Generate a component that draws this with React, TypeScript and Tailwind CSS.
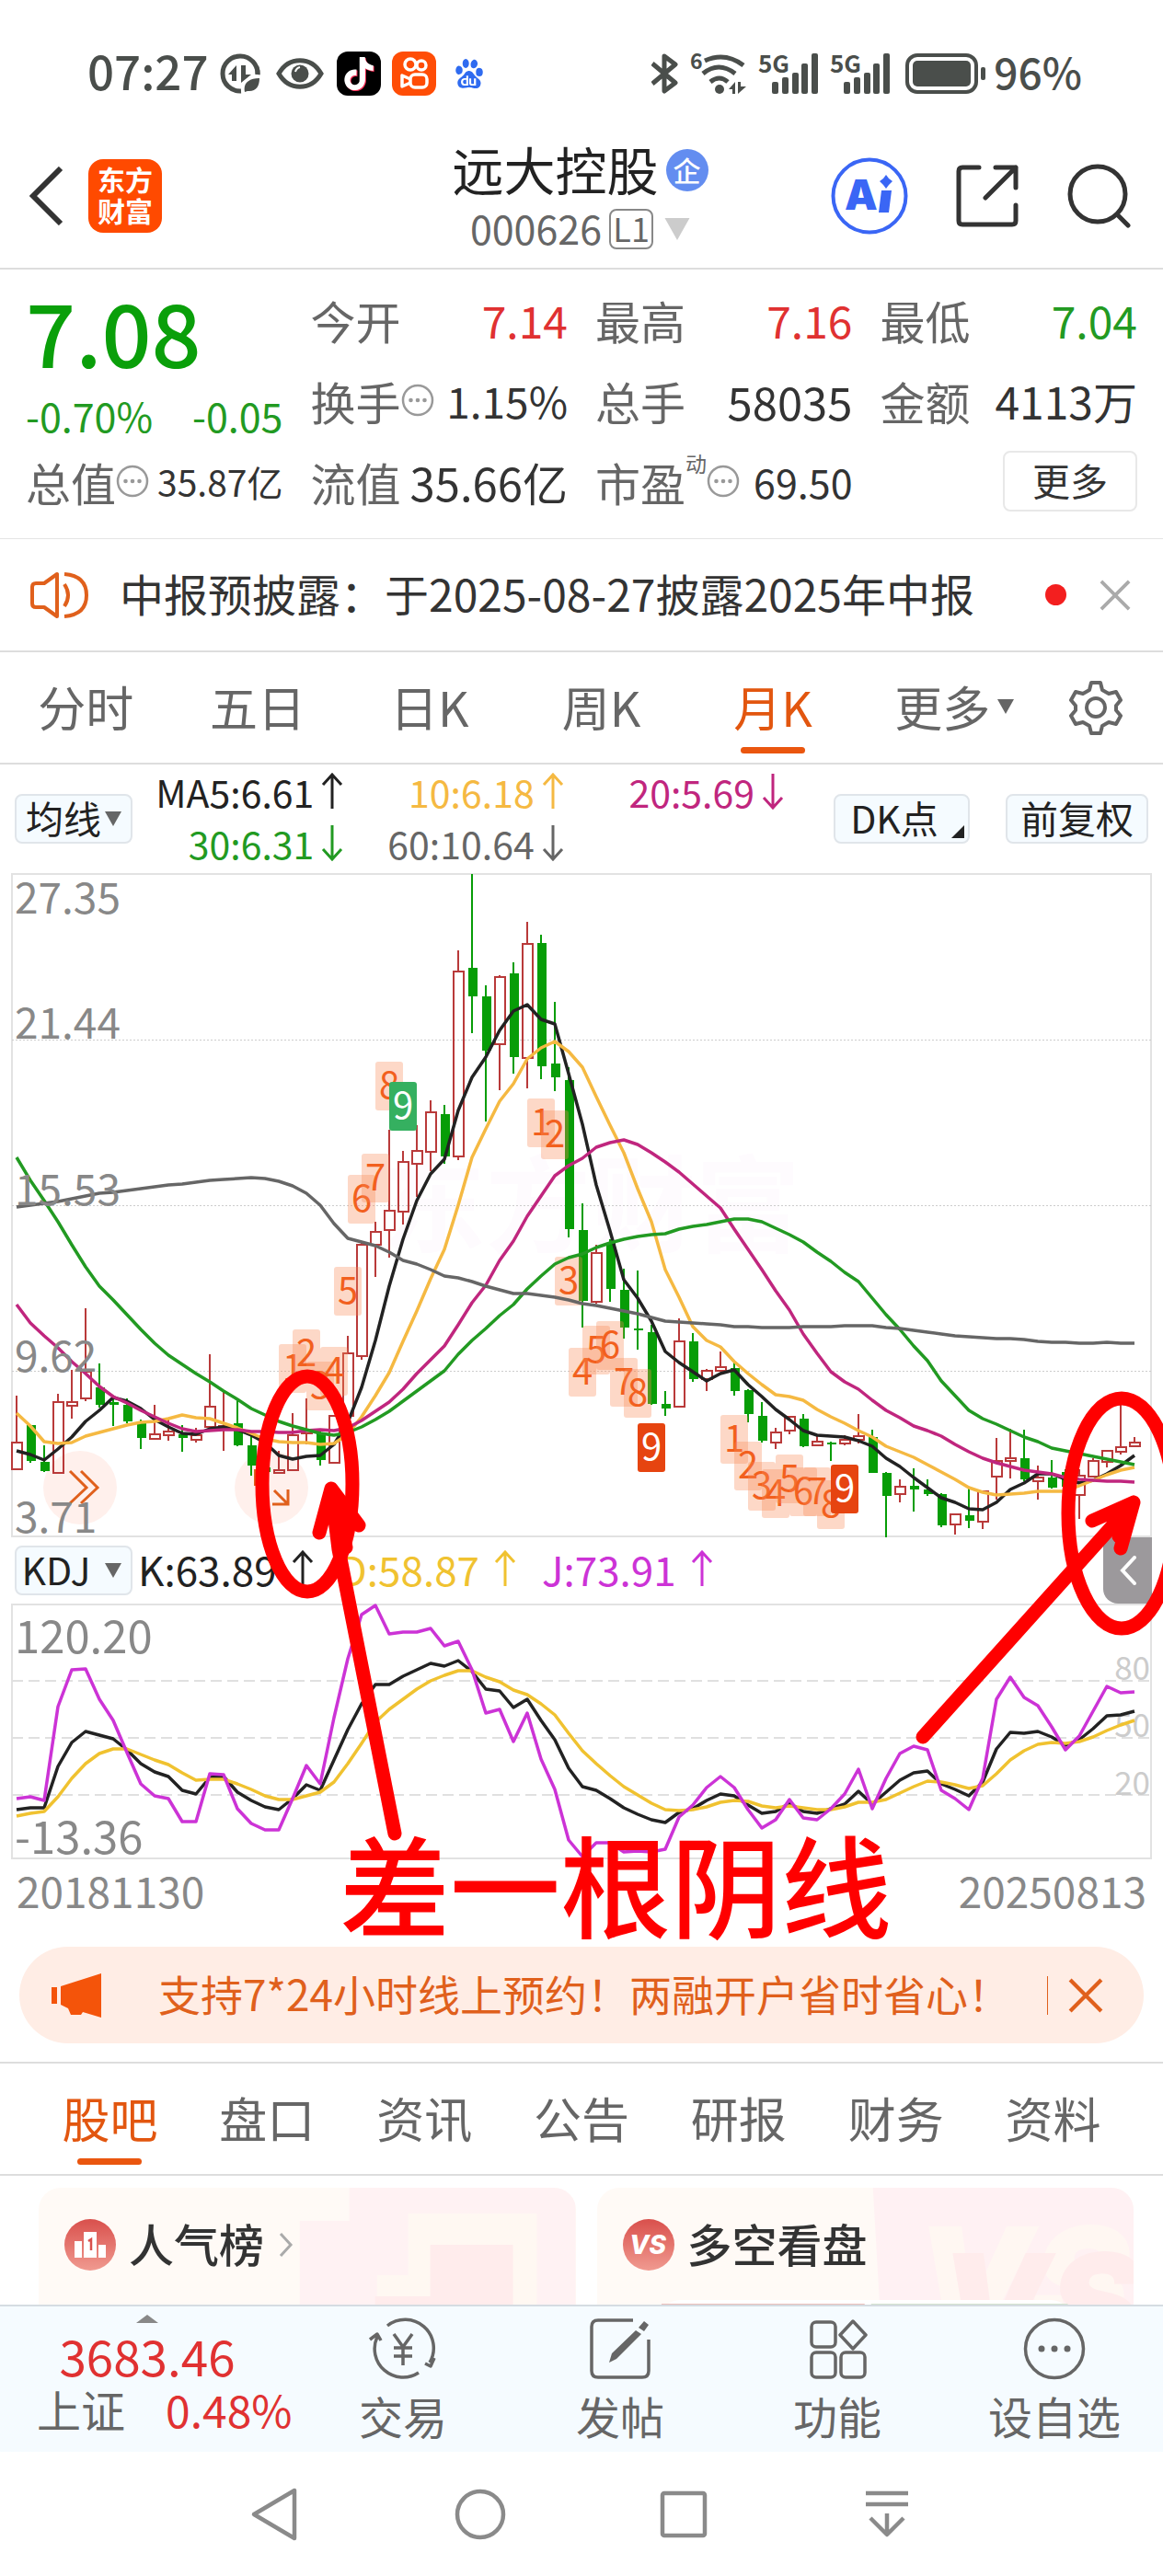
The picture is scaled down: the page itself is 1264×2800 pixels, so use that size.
import type { ReactNode } from 'react'
import clsx from 'clsx'
import { SiBaidu, SiKuaishou, SiTiktok } from 'react-icons/si'

/* ---------- chart data ---------- */

// high, body top, body bottom, low, direction (1 = up, 0 = down), in canvas units
const CANDLES: [number, number, number, number, number][] = [
  [1517, 1568, 1597, 1598, 1], [1549, 1549, 1588, 1590, 0], [1571, 1589, 1599, 1600, 0], [1515, 1524, 1601, 1602, 1],
  [1489, 1524, 1528, 1542, 1], [1422, 1491, 1520, 1523, 1], [1482, 1508, 1527, 1530, 0], [1518, 1524, 1527, 1550, 0],
  [1520, 1527, 1545, 1547, 0], [1543, 1547, 1563, 1575, 0], [1527, 1559, 1564, 1565, 1], [1543, 1556, 1560, 1566, 1],
  [1549, 1559, 1563, 1578, 0], [1552, 1560, 1565, 1568, 1], [1472, 1529, 1551, 1552, 1], [1512, 1550, 1553, 1577, 1],
  [1522, 1547, 1571, 1572, 0], [1560, 1571, 1593, 1604, 0], [1590, 1595, 1600, 1604, 0], [1577, 1598, 1601, 1601, 1],
  [1536, 1560, 1598, 1598, 1], [1520, 1555, 1558, 1570, 1], [1553, 1557, 1587, 1593, 0], [1539, 1539, 1590, 1591, 1],
  [1452, 1471, 1539, 1539, 1], [1350, 1353, 1474, 1478, 1], [1328, 1339, 1353, 1388, 1], [1228, 1316, 1337, 1367, 1],
  [1251, 1263, 1317, 1331, 1], [1223, 1251, 1265, 1301, 1], [1196, 1209, 1252, 1273, 1], [1201, 1211, 1257, 1265, 0],
  [1033, 1056, 1257, 1261, 1], [950, 1052, 1083, 1123, 0], [1071, 1083, 1142, 1219, 0], [1060, 1062, 1135, 1185, 1],
  [1046, 1058, 1149, 1167, 0], [1002, 1026, 1150, 1183, 1], [1016, 1025, 1159, 1173, 0], [1089, 1156, 1171, 1186, 0],
  [1160, 1174, 1336, 1345, 0], [1308, 1337, 1414, 1443, 0], [1353, 1362, 1415, 1417, 1], [1347, 1351, 1401, 1415, 0],
  [1379, 1402, 1443, 1455, 0], [1381, 1444, 1446, 1467, 0], [1440, 1448, 1526, 1527, 0], [1512, 1526, 1531, 1539, 0],
  [1433, 1458, 1529, 1530, 1], [1449, 1458, 1499, 1502, 0], [1488, 1490, 1499, 1512, 1], [1469, 1486, 1490, 1491, 1],
  [1481, 1487, 1512, 1517, 0], [1510, 1511, 1537, 1546, 0], [1524, 1539, 1566, 1568, 0], [1552, 1557, 1568, 1575, 1],
  [1539, 1540, 1555, 1559, 1], [1537, 1542, 1572, 1573, 0], [1560, 1567, 1571, 1572, 1], [1567, 1568, 1570, 1588, 0],
  [1560, 1565, 1569, 1571, 1], [1537, 1561, 1565, 1569, 1], [1554, 1562, 1601, 1601, 0], [1600, 1601, 1626, 1671, 0],
  [1608, 1616, 1624, 1633, 1], [1596, 1615, 1619, 1643, 0], [1608, 1619, 1624, 1626, 0], [1623, 1624, 1658, 1660, 0],
  [1645, 1646, 1657, 1668, 1], [1618, 1647, 1653, 1661, 0], [1620, 1621, 1654, 1662, 1], [1563, 1588, 1605, 1630, 1],
  [1553, 1585, 1588, 1607, 1], [1554, 1585, 1608, 1610, 0], [1593, 1606, 1610, 1630, 1], [1587, 1606, 1617, 1618, 0],
  [1597, 1600, 1616, 1620, 0], [1597, 1604, 1625, 1651, 1], [1585, 1588, 1605, 1606, 1], [1576, 1577, 1589, 1595, 1],
  [1527, 1573, 1578, 1581, 1], [1562, 1568, 1572, 1572, 1],
]

const MA60 = [1312, 1310, 1308, 1306, 1303, 1300, 1297, 1296, 1294, 1292, 1290, 1288, 1287, 1285, 1283, 1282, 1281, 1280, 1281, 1284, 1289, 1297, 1310, 1330, 1346, 1350, 1354, 1361, 1370, 1374, 1380, 1387, 1389, 1393, 1398, 1402, 1406, 1406, 1408, 1410, 1413, 1417, 1419, 1422, 1425, 1428, 1432, 1436, 1437, 1438, 1439, 1440, 1442, 1442, 1443, 1443, 1443, 1442, 1442, 1442, 1441, 1441, 1441, 1443, 1444, 1446, 1448, 1450, 1452, 1453, 1454, 1455, 1455, 1456, 1458, 1459, 1459, 1460, 1460, 1459, 1460, 1460]
const MA30 = [1258, 1283, 1305, 1328, 1353, 1377, 1398, 1413, 1429, 1445, 1460, 1473, 1483, 1493, 1502, 1512, 1521, 1531, 1538, 1545, 1550, 1554, 1558, 1560, 1557, 1551, 1543, 1534, 1523, 1512, 1501, 1490, 1472, 1457, 1444, 1430, 1418, 1401, 1387, 1374, 1367, 1363, 1356, 1351, 1347, 1344, 1342, 1341, 1336, 1333, 1331, 1328, 1325, 1325, 1328, 1335, 1342, 1350, 1361, 1371, 1383, 1393, 1411, 1429, 1445, 1463, 1479, 1501, 1517, 1533, 1542, 1548, 1555, 1562, 1567, 1574, 1577, 1580, 1583, 1586, 1589, 1592]
const MA20 = [1418, 1438, 1452, 1465, 1480, 1493, 1507, 1518, 1525, 1533, 1540, 1547, 1553, 1556, 1555, 1554, 1554, 1556, 1556, 1557, 1557, 1555, 1554, 1555, 1552, 1544, 1534, 1524, 1510, 1493, 1478, 1463, 1440, 1416, 1397, 1370, 1349, 1322, 1300, 1278, 1267, 1259, 1247, 1242, 1239, 1244, 1253, 1263, 1274, 1287, 1300, 1313, 1336, 1358, 1380, 1403, 1424, 1450, 1471, 1491, 1502, 1510, 1522, 1533, 1541, 1550, 1555, 1561, 1570, 1578, 1585, 1590, 1594, 1598, 1600, 1602, 1606, 1608, 1609, 1610, 1610, 1611]
const MA10 = [1536, 1550, 1567, 1569, 1568, 1561, 1557, 1553, 1549, 1546, 1545, 1542, 1538, 1541, 1542, 1547, 1552, 1558, 1564, 1567, 1568, 1568, 1570, 1569, 1559, 1540, 1517, 1492, 1458, 1425, 1390, 1358, 1310, 1258, 1227, 1197, 1178, 1151, 1139, 1132, 1143, 1160, 1192, 1223, 1253, 1292, 1328, 1380, 1410, 1442, 1457, 1464, 1480, 1493, 1505, 1516, 1518, 1522, 1532, 1540, 1547, 1555, 1562, 1572, 1578, 1584, 1592, 1600, 1608, 1617, 1622, 1625, 1624, 1623, 1621, 1621, 1621, 1615, 1609, 1603, 1598, 1595]
const MA5 = [1577, 1581, 1587, 1575, 1562, 1545, 1533, 1519, 1523, 1531, 1543, 1551, 1558, 1559, 1553, 1551, 1554, 1560, 1568, 1582, 1586, 1583, 1582, 1570, 1546, 1508, 1457, 1398, 1347, 1305, 1276, 1260, 1207, 1171, 1149, 1120, 1099, 1092, 1108, 1113, 1167, 1222, 1288, 1338, 1391, 1411, 1436, 1469, 1481, 1491, 1501, 1493, 1489, 1505, 1518, 1532, 1543, 1555, 1560, 1561, 1562, 1566, 1572, 1585, 1594, 1606, 1617, 1628, 1633, 1640, 1641, 1633, 1619, 1612, 1602, 1602, 1608, 1612, 1609, 1602, 1593, 1582]

const KDJ_K = [1967, 1965, 1965, 1920, 1894, 1882, 1886, 1890, 1902, 1917, 1926, 1931, 1946, 1950, 1932, 1931, 1948, 1957, 1964, 1967, 1955, 1940, 1946, 1913, 1880, 1852, 1831, 1831, 1822, 1815, 1808, 1811, 1805, 1817, 1836, 1838, 1856, 1847, 1870, 1891, 1922, 1942, 1946, 1955, 1965, 1972, 1978, 1981, 1970, 1966, 1957, 1950, 1952, 1962, 1971, 1969, 1960, 1969, 1971, 1966, 1961, 1947, 1961, 1948, 1935, 1927, 1925, 1939, 1945, 1952, 1937, 1901, 1883, 1884, 1882, 1888, 1897, 1891, 1879, 1865, 1864, 1860]
const KDJ_D = [1974, 1971, 1969, 1953, 1933, 1917, 1906, 1901, 1901, 1907, 1913, 1918, 1927, 1935, 1934, 1934, 1939, 1945, 1952, 1956, 1956, 1952, 1948, 1937, 1917, 1895, 1872, 1858, 1847, 1836, 1827, 1821, 1816, 1816, 1823, 1828, 1837, 1842, 1852, 1864, 1884, 1903, 1917, 1930, 1942, 1951, 1960, 1967, 1968, 1967, 1964, 1959, 1957, 1958, 1963, 1965, 1963, 1965, 1967, 1967, 1964, 1959, 1959, 1956, 1949, 1942, 1936, 1937, 1940, 1944, 1941, 1928, 1913, 1903, 1896, 1894, 1895, 1893, 1888, 1881, 1875, 1870]
const KDJ_J = [1955, 1953, 1957, 1855, 1815, 1814, 1847, 1870, 1905, 1939, 1952, 1955, 1980, 1980, 1928, 1929, 1966, 1982, 1989, 1989, 1955, 1919, 1939, 1867, 1803, 1755, 1745, 1776, 1774, 1774, 1770, 1789, 1784, 1815, 1862, 1858, 1893, 1862, 1912, 1945, 2000, 2018, 2003, 2003, 2013, 2012, 2013, 2010, 1975, 1962, 1943, 1931, 1943, 1967, 1987, 1978, 1956, 1976, 1978, 1966, 1950, 1923, 1966, 1933, 1906, 1898, 1902, 1946, 1955, 1967, 1933, 1847, 1823, 1845, 1854, 1877, 1902, 1887, 1860, 1833, 1840, 1839]

// nine-turn counters: x, y, digit, box style
const COUNTERS: [number, number, number, 'step' | 'top' | 'bottom'][] = [
  [303, 1461, 1, 'step'], [318, 1445, 2, 'step'], [333, 1480, 3, 'step'], [348, 1464, 4, 'step'],
  [363, 1377, 5, 'step'], [378, 1277, 6, 'step'], [393, 1254, 7, 'step'], [408, 1154, 8, 'step'],
  [423, 1176, 9, 'top'], [573, 1194, 1, 'step'], [588, 1207, 2, 'step'], [603, 1366, 3, 'step'],
  [618, 1465, 4, 'step'], [633, 1441, 5, 'step'], [648, 1436, 6, 'step'], [663, 1476, 7, 'step'],
  [678, 1488, 8, 'step'], [693, 1547, 9, 'bottom'], [783, 1538, 1, 'step'], [798, 1567, 2, 'step'],
  [813, 1589, 3, 'step'], [828, 1597, 4, 'step'], [843, 1581, 5, 'step'], [858, 1595, 6, 'step'],
  [873, 1595, 7, 'step'], [888, 1609, 8, 'step'], [903, 1592, 9, 'bottom'],
]

const candleX = (i: number) => 18 + i * 15
const toPoints = (ys: number[]) => ys.map((y, i) => `${candleX(i)},${y}`).join(' ')

/* ---------- small pieces ---------- */

function Trend({ up = false }: { up?: boolean }) {
  return (
    <svg viewBox="0 0 24 40" className="h-10 w-6" fill="none" stroke="currentColor" strokeWidth="3">
      {up ? <path d="M12 39V2M2 13 12 2l10 11" /> : <path d="M12 1v37M2 27l10 11 10-11" />}
    </svg>
  )
}

function Caret({ className }: { className?: string }) {
  return (
    <svg viewBox="0 0 18 16" className={className} fill="currentColor">
      <path d="M0 0h18L9 16z" />
    </svg>
  )
}

function Cross({ className }: { className?: string }) {
  return (
    <svg viewBox="0 0 36 36" className={className} fill="none" stroke="currentColor" strokeWidth="4">
      <path d="M2 2l32 32M34 2 2 34" />
    </svg>
  )
}

function InfoDot() {
  return (
    <svg viewBox="0 0 36 36" className="size-9 shrink-0 text-[#999]">
      <circle cx="18" cy="18" r="16" fill="none" stroke="currentColor" strokeWidth="2.5" />
      <g fill="currentColor">
        <circle cx="10.500" cy="18" r="2.300" />
        <circle cx="18" cy="18" r="2.300" />
        <circle cx="25.500" cy="18" r="2.300" />
      </g>
    </svg>
  )
}

function Signal() {
  return (
    <svg viewBox="0 0 66 46" className="h-[46px] w-[66px] overflow-visible" fill="currentColor">
      <text x="0" y="22" fontSize="26" fontWeight="700" fontFamily="Noto Sans CJK SC, sans-serif">5G</text>
      <rect x="15" y="32" width="7" height="13" rx="2" />
      <rect x="26" y="27" width="7" height="18" rx="2" />
      <rect x="37" y="22" width="7" height="23" rx="2" />
      <rect x="47" y="12" width="7" height="33" rx="2" />
      <rect x="58" y="1" width="7" height="44" rx="2" />
    </svg>
  )
}

/* ---------- sections ---------- */

function StatusBar() {
  return (
    <div className="flex h-[135px] items-center justify-between pt-6 pr-[88px] pl-[95px] text-[#4a4e4b]">
      <div className="flex items-center">
        <span className="mr-3 pb-1.5 text-[51px] leading-none font-medium">07:27</span>
        <svg viewBox="0 0 46 46" className="mr-4 size-[46px]" fill="none" stroke="currentColor" strokeWidth="5">
          <path d="M42 24A19 19 0 1 0 24 42" />
          <path d="M42 24a19 19 0 0 0-1-8" />
          <g fill="currentColor" stroke="none">
            <path d="M10 24 19 14v17h-5v-7zM24 14h5v10h6l-11 9zM28 43c-2-9 4-15 16-15 0 9-4 15-13 14z" />
          </g>
        </svg>
        <svg viewBox="0 0 52 36" className="mr-3.5 h-9 w-[52px]" fill="none" stroke="currentColor" strokeWidth="5">
          <path d="M3 18C14-1 38-1 49 18 38 37 14 37 3 18z" />
          <circle cx="26" cy="18" r="9.500" fill="currentColor" stroke="none" />
          <path d="M21 16q1-4 5-5" stroke="#fff" strokeWidth="2" />
        </svg>
        <span className="mr-3 flex size-12 items-center justify-center rounded-xl bg-black text-white">
          <SiTiktok className="size-9 drop-shadow-[1px_1px_0_#fe2c55]" />
        </span>
        <span className="mr-3 flex size-12 items-center justify-center rounded-xl bg-[#ff4d06]">
          <svg viewBox="0 0 48 48" className="size-12" fill="none" stroke="#fff" strokeWidth="3.500" strokeLinejoin="round">
            <circle cx="20" cy="14" r="6" />
            <circle cx="32" cy="15" r="5" />
            <rect x="20" y="25" width="18" height="14" rx="5" />
            <path d="M20 30l-9-4v12l9-4" />
          </svg>
        </span>
        <span className="flex size-12 items-center justify-center rounded-xl text-[#2f6bf0]">
          <SiBaidu className="size-8" />
        </span>
      </div>
      <div className="flex items-center">
        <svg viewBox="0 0 30 44" className="mr-3 h-11 w-[30px]" fill="none" stroke="currentColor" strokeWidth="5" strokeLinejoin="round">
          <path d="M1 11 26 32 14 41V3l12 9L1 33" />
        </svg>
        <svg viewBox="0 0 62 46" className="mr-3 h-[46px] w-[62px] overflow-visible" fill="none" stroke="currentColor" strokeWidth="5">
          <path d="M16 9q22-10 42 5M14 23q17-14 35 0M22 32q10-8 19 0" />
          <g fill="currentColor" stroke="none">
            <text x="0" y="18" fontSize="23" fontWeight="700" fontFamily="Noto Sans CJK SC, sans-serif">6</text>
            <circle cx="32" cy="40" r="5" />
            <path d="M42 40l7-8v13h-3v-5zM52 32h3v5h6l-9 8z" />
          </g>
        </svg>
        <div className="mr-3">
          <Signal />
        </div>
        <div className="mr-4">
          <Signal />
        </div>
        <svg viewBox="0 0 88 44" className="mr-2 h-11 w-[88px]" fill="currentColor">
          <rect x="2" y="2" width="75" height="40" rx="11" fill="none" stroke="currentColor" strokeWidth="4" />
          <rect x="8" y="8" width="63" height="28" rx="5" />
          <rect x="82" y="15" width="5" height="14" rx="2" />
        </svg>
        <span className="pb-1.5 text-[46px] leading-none font-medium">96%</span>
      </div>
    </div>
  )
}

function Header() {
  return (
    <header className="grid h-[158px] grid-cols-[1fr_auto_1fr] items-center border-b-2 border-[#ddd] pr-[35px] pl-8">
      <div className="flex items-center gap-[26px]">
        <button type="button" aria-label="返回">
          <svg viewBox="0 0 38 64" className="h-16 w-[38px]" fill="none" stroke="#333" strokeWidth="6">
            <path d="M34 2 4 32l30 30" />
          </svg>
        </button>
        <a href="#home" className="flex size-20 flex-col items-center justify-center rounded-2xl bg-[#ff4a00] pb-1 text-[30px] leading-[34px] font-bold text-white">
          <span>东方</span>
          <span>财富</span>
        </a>
      </div>
      <div className="flex flex-col items-center gap-2 pb-1">
        <h1 className="flex items-center gap-2 text-[56px] leading-[64px] text-[#222]">
          远大控股
          <span className="mt-1 flex size-[46px] items-center justify-center rounded-full bg-[#638df0] pb-0.5 text-[30px] leading-none font-medium text-white">企</span>
        </h1>
        <div className="flex items-center gap-2 text-[43px] leading-[48px] text-[#666]">
          000626
          <span className="mt-1 flex h-11 w-12 items-center justify-center rounded-lg border-2 border-[#888] pb-1 text-[36px] leading-none">L1</span>
          <Caret className="mt-1 ml-1 h-6 w-7 text-[#ccc]" />
        </div>
      </div>
      <div className="flex items-center justify-end gap-[52px]">
        <button type="button" aria-label="AI 助手">
          <svg viewBox="0 0 84 84" className="size-[84px]" fill="#3a66f5">
            <circle cx="42" cy="42" r="39.500" fill="none" stroke="#3a66f5" strokeWidth="4" />
            <text x="15" y="57" fontSize="45" fontWeight="900" fontFamily="Inter, sans-serif">A</text>
            <path d="M55 36h11l-3 24H52zM60 19l3 4 4 3-4 4-3 4-3-4-4-4 4-3z" />
          </svg>
        </button>
        <button type="button" aria-label="分享">
          <svg viewBox="0 0 68 68" className="size-[68px]" fill="none" stroke="#333" strokeWidth="5" strokeLinecap="round" strokeLinejoin="round">
            <path d="M25 3H7Q3 3 3 7v54q0 4 4 4h54q4 0 4-4V44M43 3h22v22M65 3 32 36" />
          </svg>
        </button>
        <button type="button" aria-label="搜索">
          <svg viewBox="0 0 70 70" className="size-[70px]" fill="none" stroke="#333" strokeWidth="5" strokeLinecap="round">
            <circle cx="34" cy="33" r="30" />
            <path d="M55 55l12 12" />
          </svg>
        </button>
      </div>
    </header>
  )
}

interface QuoteCellProps {
  label: string
  value: string
  info?: boolean
  sup?: string
  valueClass?: string
}

function QuoteCell({ label, value, info, sup, valueClass = 'text-[48px] text-[#333]' }: QuoteCellProps) {
  return (
    <div className="flex items-center justify-between leading-none whitespace-nowrap">
      <dt className="flex items-center text-[49px] text-[#666]">
        {label}
        {sup && <sup className="-top-5 text-[23px] leading-none">{sup}</sup>}
        {info && <InfoDot />}
      </dt>
      <dd className={valueClass}>{value}</dd>
    </div>
  )
}

function Quote() {
  return (
    <section className="border-b border-[#e4e4e4] px-7 pt-2.5 pb-[18px]">
      <dl className="grid auto-rows-[88px] grid-cols-4 gap-x-[30px]">
        <div className="row-span-2 flex flex-col justify-between pt-2 pb-1 text-[#0a9f0a]">
          <dd className="text-[95px] leading-[96px] font-medium">7.08</dd>
          <dd className="flex justify-between text-[43px] leading-[48px] text-[#229a22]">
            <span>-0.70%</span>
            <span>-0.05</span>
          </dd>
        </div>
        <QuoteCell label="今开" value="7.14" valueClass="text-[48px] text-[#e03131]" />
        <QuoteCell label="最高" value="7.16" valueClass="text-[48px] text-[#e03131]" />
        <QuoteCell label="最低" value="7.04" valueClass="text-[48px] text-[#229a22]" />
        <QuoteCell label="换手" info value="1.15%" valueClass="text-[46px] text-[#333]" />
        <QuoteCell label="总手" value="58035" valueClass="text-[49px] text-[#333]" />
        <QuoteCell label="金额" value="4113万" />
        <QuoteCell label="总值" info value="35.87亿" valueClass="text-[39px] text-[#333]" />
        <QuoteCell label="流值" value="35.66亿" valueClass="text-[49px] text-[#333]" />
        <QuoteCell label="市盈" sup="动" info value="69.50" valueClass="text-[43px] text-[#333]" />
        <div className="flex items-center justify-end">
          <button type="button" className="h-[66px] w-[146px] rounded-lg border-2 border-[#e8e8e8] pb-1 text-[41px] leading-none text-[#333]">
            更多
          </button>
        </div>
      </dl>
    </section>
  )
}

function Notice() {
  return (
    <section className="flex h-[123px] items-center border-b-2 border-[#ddd] pr-[35px] pl-8">
      <svg viewBox="0 0 64 52" className="h-[52px] w-16 shrink-0" fill="none" stroke="#e0601c" strokeWidth="4" strokeLinejoin="round">
        <path d="M3 17q0-4 4-4h9L30 3v46L16 39H7q-4 0-4-4z" />
        <path d="M38 14q8 12 0 24M38 3q24 2 24 23T38 49" />
      </svg>
      <p className="ml-[34px] flex-1 pb-1.5 text-[48px] leading-none whitespace-nowrap text-[#333]">中报预披露：于2025-08-27披露2025年中报</p>
      <span className="size-[23px] rounded-full bg-[#f31f1f]" />
      <button type="button" aria-label="关闭提示" className="ml-9">
        <Cross className="size-[34px] text-[#aaa]" />
      </button>
    </section>
  )
}

function Tab({ active = false, children }: { active?: boolean; children: ReactNode }) {
  return (
    <button
      type="button"
      className={clsx('relative flex h-[120px] items-center justify-center pb-0.5 text-[52px] leading-none', active ? 'text-[#e2560f]' : 'text-[#666]')}
    >
      {children}
      {active && <span className="absolute bottom-2.5 left-1/2 h-[7px] w-[70px] -translate-x-1/2 rounded-full bg-[#ea560f]" />}
    </button>
  )
}

function PeriodTabs() {
  return (
    <nav className="grid grid-cols-[repeat(5,187fr)_208fr_119fr] border-b-2 border-[#ddd] pr-1">
      <Tab>分时</Tab>
      <Tab>五日</Tab>
      <Tab>日K</Tab>
      <Tab>周K</Tab>
      <Tab active>月K</Tab>
      <Tab>
        更多
        <Caret className="ml-2 h-4 w-[18px]" />
      </Tab>
      <button type="button" aria-label="设置" className="flex items-center justify-center pr-5">
        <svg viewBox="0 0 60 60" className="size-[60px]" fill="none" stroke="#666" strokeWidth="4" strokeLinejoin="round">
          <path d="M25 3h10l2 8 7 4 8-2 5 9-5 6v5l5 6-5 9-8-2-7 4-2 8H25l-2-8-7-4-8 2-5-9 5-6v-5l-5-6 5-9 8 2 7-4z" />
          <circle cx="30" cy="30" r="10" />
        </svg>
      </button>
    </nav>
  )
}

const MA_LEGEND = [
  { text: 'MA5:6.61', up: true, color: 'text-[#222]' },
  { text: '10:6.18', up: true, color: 'text-[#f5b942]' },
  { text: '20:5.69', up: false, color: 'text-[#c0267e]' },
  { text: '30:6.31', up: false, color: 'text-[#229a22]' },
  { text: '60:10.64', up: false, color: 'text-[#666]' },
]

const chip = 'flex h-[54px] shrink-0 items-center justify-center rounded-lg border-2 border-[#e0e5ea] bg-[#f5fbff] pb-1 text-[41px] leading-none text-[#222]'

function MaRow() {
  return (
    <div className="flex h-[118px] items-center pr-4 pl-4">
      <button type="button" className={clsx(chip, 'w-32')}>
        均线
        <Caret className="mt-1 ml-1 h-4 w-[18px] text-[#666]" />
      </button>
      <ul className="grid flex-1 grid-cols-[230fr_240fr_240fr] pb-1">
        {MA_LEGEND.map((m) => (
          <li key={m.text} className={clsx('flex h-14 items-center justify-end gap-2 text-[41px] leading-none', m.color)}>
            {m.text}
            <Trend up={m.up} />
          </li>
        ))}
      </ul>
      <button type="button" className={clsx(chip, 'relative ml-[54px] w-[148px] pr-4')}>
        DK点
        <svg viewBox="0 0 14 14" className="absolute right-1 bottom-1 size-3.5" fill="#222">
          <path d="M14 0v14H0z" />
        </svg>
      </button>
      <button type="button" className={clsx(chip, 'ml-[39px] w-[155px]')}>前复权</button>
    </div>
  )
}

const boxFill = { step: '#fa8a55', top: '#35b060', bottom: '#e64410' }

function PriceChart() {
  return (
    <svg viewBox="0 949 1264 722" className="block w-full" fontFamily="Noto Sans CJK SC, sans-serif">
      <text x="414" y="1352" fontSize="114" fontWeight="700" fill="#fefbfe">东方财富</text>
      <rect x="13" y="950" width="1238" height="720" fill="none" stroke="#e2e2e2" strokeWidth="2" />
      <g stroke="#ccc" strokeWidth="1" strokeDasharray="2 2">
        <path d="M13 1130.500h1238M13 1310.500h1238M13 1490.500h1238" />
      </g>

      <circle cx="87" cy="1617" r="40" fill="#fff0ec" />
      <circle cx="295" cy="1617" r="40" fill="#fff0ec" />

      {CANDLES.map(([high, top, bottom, low, up], i) => {
        const x = candleX(i)
        return up ? (
          <g key={i} stroke="#b93a3a" strokeWidth="2" fill="none">
            <path d={`M${x} ${high}V${top}M${x} ${bottom}V${low}`} />
            <rect x={x - 5} y={top} width="11" height={bottom - top} />
          </g>
        ) : (
          <g key={i} fill="#079d07">
            <rect x={x - 1} y={high} width="2" height={low - high} />
            <rect x={x - 4} y={top} width="10" height={bottom - top} />
          </g>
        )
      })}

      {COUNTERS.map(([x, y, n, kind]) => (
        <g key={x}>
          <rect x={x} y={y} width="30" height="53" rx="3" fill={boxFill[kind]} fillOpacity={kind === 'step' ? 0.33 : 1} />
          <text x={x + 15} y={y + 40} fontSize="40" textAnchor="middle" fill={kind === 'step' ? '#f2601e' : '#fff'}>{n}</text>
        </g>
      ))}

      <g fill="none" strokeWidth="3.500" strokeLinejoin="round">
        <polyline points={toPoints(MA5)} stroke="#222" />
        <polyline points={toPoints(MA10)} stroke="#f5b942" />
        <polyline points={toPoints(MA20)} stroke="#c0267e" />
        <polyline points={toPoints(MA30)} stroke="#229a22" />
        <polyline points={toPoints(MA60)} stroke="#666" />
      </g>

      <g fill="none" stroke="#e0601c" strokeWidth="3">
        <path d="M76 1599l18 18-18 17M88 1599l18 18-18 17" />
        <path d="M298 1620l14 14M313 1619v16h-17" />
      </g>
      <rect x="276" y="1597" width="4" height="18" fill="#e0601c" />

      <g fill="#888" fontSize="46">
        <text x="16" y="993">27.35</text>
        <text x="16" y="1129">21.44</text>
        <text x="16" y="1310">15.53</text>
        <text x="16" y="1491">9.62</text>
        <text x="16" y="1666">3.71</text>
      </g>
    </svg>
  )
}

function KdjRow() {
  return (
    <div className="flex h-[72px] items-center gap-1.5 pl-4 text-[44px] leading-none">
      <button type="button" className={clsx(chip, 'w-32 gap-4 pr-1')}>
        KDJ
        <Caret className="mt-1 h-4 w-[18px] text-[#666]" />
      </button>
      <ul className="flex flex-1 gap-7 pb-1">
        <li className="flex items-center gap-4 text-[#222]">K:63.89<Trend up /></li>
        <li className="flex items-center gap-4 text-[#f0c230]">D:58.87<Trend up /></li>
        <li className="flex items-center gap-4 text-[#cc33d6]">J:73.91<Trend up /></li>
      </ul>
      <button type="button" aria-label="展开侧栏" className="mr-3 flex h-[72px] w-[53px] items-center justify-center rounded-bl-2xl bg-[#9c999c]">
        <svg viewBox="0 0 18 32" className="h-8 w-[18px]" fill="none" stroke="#fff" strokeWidth="4" strokeLinecap="round">
          <path d="M16 2 3 16l13 14" />
        </svg>
      </button>
    </div>
  )
}

function KdjChart() {
  return (
    <svg viewBox="0 1743 1264 278" className="block w-full" fontFamily="Noto Sans CJK SC, sans-serif">
      <rect x="13" y="1744" width="1238" height="276" fill="none" stroke="#e2e2e2" strokeWidth="2" />
      <path d="M13 1827h1238M13 1889h1238M13 1951h1238" stroke="#e0e0e0" strokeWidth="2" strokeDasharray="12 6" />
      <g fill="#888" fontSize="49">
        <text x="16" y="1797">120.20</text>
        <text x="16" y="2015">-13.36</text>
      </g>
      <g fill="#ccc" fontSize="35" textAnchor="end">
        <text x="1250" y="1826">80</text>
        <text x="1250" y="1888">50</text>
        <text x="1250" y="1951">20</text>
      </g>
      <g fill="none" strokeWidth="3.500" strokeLinejoin="round">
        <polyline points={toPoints(KDJ_K)} stroke="#222" />
        <polyline points={toPoints(KDJ_D)} stroke="#f0c230" />
        <polyline points={toPoints(KDJ_J)} stroke="#cc33d6" />
      </g>
    </svg>
  )
}

// hand-drawn marks that lie over both charts
function Marks() {
  return (
    <svg viewBox="0 831 1264 1285" className="pointer-events-none absolute inset-0 h-full w-full" fontFamily="Noto Sans CJK SC, sans-serif">
      <g fill="none" stroke="#f00" strokeWidth="15" strokeLinecap="round" strokeLinejoin="round">
        <ellipse cx="334" cy="1613" rx="49" ry="117" />
        <path d="M347 1666l13-48 30 40M360 1618l8 66 61 309M362 1622l14 60" />
        <ellipse cx="1219" cy="1645" rx="58" ry="125" />
        <path d="M1003 1888 1232 1633l-45 20M1232 1633l-14 50M1226 1640l-10 30" />
      </g>
      <text x="369" y="2098" fontSize="120" fontWeight="500" fill="#f00">差一根阴线</text>
    </svg>
  )
}

function ChartPanel() {
  return (
    <section className="relative">
      <MaRow />
      <PriceChart />
      <KdjRow />
      <KdjChart />
      <div className="flex justify-between px-[18px] pt-[9px] pb-[38px] text-[46px] leading-[48px] text-[#888]">
        <time dateTime="2018-11-30">20181130</time>
        <time dateTime="2025-08-13">20250813</time>
      </div>
      <Marks />
    </section>
  )
}

function Banner() {
  return (
    <section className="mx-[21px] mb-5 flex h-[105px] items-center rounded-full bg-[#ffede5] pr-11 pl-[35px] text-[#e0601c]">
      <svg viewBox="0 0 54 48" className="h-12 w-[54px] shrink-0" fill="#f4540a">
        <path d="M0 15h6v18H0zM10 14 54 0v48l-20-6-2 3H21l-3-7-8-4z" />
      </svg>
      <p className="ml-[62px] flex-1 pb-1.5 text-[46px] leading-none whitespace-nowrap">支持7*24小时线上预约！两融开户省时省心！</p>
      <span className="h-[42px] w-px bg-[#e0601c]" />
      <button type="button" aria-label="关闭广告" className="ml-[22px]">
        <Cross className="size-[38px]" />
      </button>
    </section>
  )
}

function SectionTabs() {
  return (
    <nav className="grid grid-cols-7 border-t-2 border-b-2 border-[#ddd] px-[34px]">
      <Tab active>股吧</Tab>
      <Tab>盘口</Tab>
      <Tab>资讯</Tab>
      <Tab>公告</Tab>
      <Tab>研报</Tab>
      <Tab>财务</Tab>
      <Tab>资料</Tab>
    </nav>
  )
}

function FeatureCards() {
  return (
    <section className="grid h-[140px] grid-cols-2 gap-[23px] overflow-hidden pt-[13px] pr-8 pl-[42px]">
      <a href="#rank" className="relative flex h-52 items-start overflow-hidden rounded-3xl bg-[#fffaf6] pt-[34px] pl-7">
        <svg viewBox="0 0 584 208" className="absolute inset-0 h-full w-full">
          <path d="M338 0h246v208H284V36h54z" fill="#fff2f3" />
          <path d="M402 28h140v180H368V95h34z" fill="#fff8f2" />
          <path d="M426 62h90v146H366v-90h60z" fill="#ffecec" />
        </svg>
        <svg viewBox="0 0 56 56" className="relative size-14">
          <defs>
            <linearGradient id="rankFill" x1="0" y1="0" x2="0" y2="1">
              <stop offset="0" stopColor="#d9504c" />
              <stop offset="1" stopColor="#f09a90" />
            </linearGradient>
          </defs>
          <circle cx="28" cy="28" r="28" fill="url(#rankFill)" />
          <path d="M11 24h8v18h-8zM21 14h14v28H21zM37 28h8v14h-8z" fill="#fff" />
          <path d="M26 24l3-2v12" fill="none" stroke="#d9504c" strokeWidth="2.500" />
        </svg>
        <h2 className="relative ml-3.5 text-[49px] leading-[52px] font-medium text-[#333]">人气榜</h2>
        <svg viewBox="0 0 16 28" className="relative mt-3.5 ml-4 h-7 w-4" fill="none" stroke="#aaa" strokeWidth="3">
          <path d="M2 2l11 12L2 26" />
        </svg>
      </a>
      <a href="#versus" className="relative flex h-52 items-start overflow-hidden rounded-3xl bg-[#fffaf6] pt-[34px] pl-7">
        <svg viewBox="0 0 584 208" className="absolute inset-0 h-full w-full" fontFamily="Inter, sans-serif">
          <path d="M300 0h284v208H312z" fill="#fff1f3" />
          <text x="345" y="158" fontSize="160" fontWeight="900" fontStyle="italic" fill="#fff7f2">VS</text>
          <text x="372" y="180" fontSize="150" fontWeight="900" fontStyle="italic" fill="#ffecec">VS</text>
          <rect x="70" y="122" width="444" height="80" rx="20" fill="#fff" />
          <path d="M70 126h221v70H70z" fill="#eabfbb" />
          <path d="M298 126h214v70H298z" fill="#d3e2cf" />
        </svg>
        <svg viewBox="0 0 56 56" className="relative size-14" fontFamily="Inter, sans-serif">
          <circle cx="28" cy="28" r="28" fill="url(#rankFill)" />
          <text x="27" y="38" fontSize="28" fontWeight="800" fontStyle="italic" textAnchor="middle" fill="#fff">VS</text>
        </svg>
        <h2 className="relative ml-3.5 text-[49px] leading-[52px] font-medium text-[#333]">多空看盘</h2>
      </a>
    </section>
  )
}

function ToolButton({ label, children }: { label: string; children: ReactNode }) {
  return (
    <button type="button" className="flex flex-col items-center pt-3 text-[48px] leading-[64px] text-[#666]">
      <svg viewBox="0 0 68 68" className="mb-1.5 size-[68px] overflow-visible" fill="none" stroke="currentColor" strokeWidth="3.500" strokeLinejoin="round">
        {children}
      </svg>
      {label}
    </button>
  )
}

function BottomBar() {
  return (
    <footer className="grid h-[160px] grid-cols-[320fr_repeat(4,236fr)] border-t-2 border-[#d5dce2] bg-[#f5fbff]">
      <a href="#index" className="flex flex-col items-center pt-[9px] text-[#e03131]">
        <svg viewBox="0 0 24 9" className="h-[9px] w-6" fill="#888">
          <path d="M12 0l12 9H0z" />
        </svg>
        <strong className="mt-1.5 text-[53px] leading-[58px] font-normal">3683.46</strong>
        <span className="flex w-full gap-11 pl-10 text-[48px] leading-[58px]">
          <span className="text-[#666]">上证</span>
          0.48%
        </span>
      </a>
      <ToolButton label="交易">
        <path d="M17 9a31 31 0 0 1 46 40M51 60A31 31 0 0 1 6 21M-2 24l8-6 4 7M68 44l-4 9-6-3" />
        <path d="M24 18l10 14 10-14M34 32v20M24 33h20M24 42h20" />
      </ToolButton>
      <ToolButton label="发帖">
        <path d="M48 3H10Q3 3 3 10v48q0 7 7 7h48q7 0 7-7V24" />
        <path d="M60 4l5 4-5 7-6-4zM51 14l6 4-27 27-8 4 3-10z" fill="currentColor" stroke="none" />
      </ToolButton>
      <ToolButton label="功能">
        <rect x="6" y="5" width="26" height="27" rx="5" />
        <path d="M51 4 65 19 51 34 37 19z" />
        <rect x="6" y="38" width="26" height="27" rx="5" />
        <rect x="38" y="38" width="26" height="27" rx="5" />
      </ToolButton>
      <ToolButton label="设自选">
        <circle cx="34" cy="34" r="31.500" />
        <g fill="currentColor" stroke="none">
          <circle cx="20" cy="34" r="3.500" />
          <circle cx="34" cy="34" r="3.500" />
          <circle cx="48" cy="34" r="3.500" />
        </g>
      </ToolButton>
    </footer>
  )
}

function SystemNav() {
  const icons = [
    { label: '返回键', art: <path d="M51 6v52L7 32z" /> },
    { label: '主页键', art: <circle cx="32" cy="32" r="25" /> },
    { label: '任务键', art: <rect x="9" y="9" width="46" height="46" rx="2" /> },
    { label: '收起键', art: <path d="M9 9h46M9 21h46M32 31v24M14 36l18 18 18-18" /> },
  ]
  return (
    <div className="mx-auto grid h-[136px] max-w-[884px] grid-cols-4 place-items-center">
      {icons.map(({ label, art }) => (
        <button key={label} type="button" aria-label={label}>
          <svg viewBox="0 0 64 64" className="size-16" fill="none" stroke="#8a8a8a" strokeWidth="4.500" strokeLinejoin="round">
            {art}
          </svg>
        </button>
      ))}
    </div>
  )
}

export default function App() {
  return (
    <main className="min-h-screen overflow-hidden bg-white font-['Noto_Sans_CJK_SC',sans-serif]">
      <StatusBar />
      <Header />
      <Quote />
      <Notice />
      <PeriodTabs />
      <ChartPanel />
      <Banner />
      <SectionTabs />
      <FeatureCards />
      <BottomBar />
      <SystemNav />
    </main>
  )
}
